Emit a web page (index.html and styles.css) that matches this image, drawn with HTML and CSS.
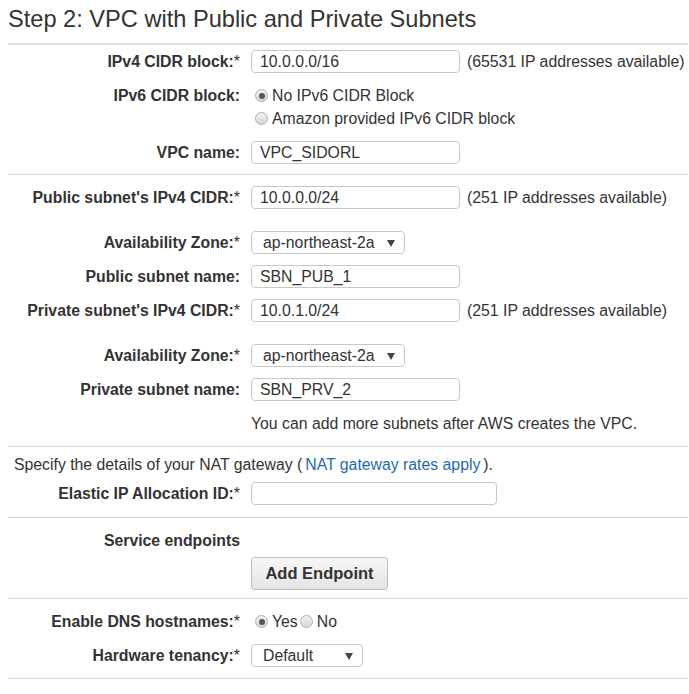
FILE: index.html
```html
<!DOCTYPE html>
<html>
<head>
<meta charset="utf-8">
<link rel="stylesheet" href="styles.css">
</head>
<body>
<div class="page">
  <h1 class="title">Step 2: VPC with Public and Private Subnets</h1>

  <div class="section s1">
    <div class="row">
      <div class="label">IPv4 CIDR block:<span class="req">*</span></div>
      <div class="field"><span class="input w209">10.0.0.0/16</span><span class="hint">(65531 IP addresses available)</span></div>
    </div>
    <div class="row">
      <div class="label">IPv6 CIDR block:</div>
      <div class="field col">
        <div class="opt"><span class="radio on"></span>No IPv6 CIDR Block</div>
        <div class="opt"><span class="radio"></span>Amazon provided IPv6 CIDR block</div>
      </div>
    </div>
    <div class="row">
      <div class="label">VPC name:</div>
      <div class="field"><span class="input w209">VPC_SIDORL</span></div>
    </div>
  </div>

  <div class="section s2">
    <div class="row extra">
      <div class="label">Public subnet's IPv4 CIDR:<span class="req">*</span></div>
      <div class="field"><span class="input w209">10.0.0.0/24</span><span class="hint">(251 IP addresses available)</span></div>
    </div>
    <div class="row">
      <div class="label">Availability Zone:<span class="req">*</span></div>
      <div class="field"><span class="select w154"><span>ap-northeast-2a</span><span class="arrow"></span></span></div>
    </div>
    <div class="row">
      <div class="label">Public subnet name:</div>
      <div class="field"><span class="input w209">SBN_PUB_1</span></div>
    </div>
    <div class="row extra">
      <div class="label">Private subnet's IPv4 CIDR:<span class="req">*</span></div>
      <div class="field"><span class="input w209">10.0.1.0/24</span><span class="hint">(251 IP addresses available)</span></div>
    </div>
    <div class="row">
      <div class="label">Availability Zone:<span class="req">*</span></div>
      <div class="field"><span class="select w154"><span>ap-northeast-2a</span><span class="arrow"></span></span></div>
    </div>
    <div class="row">
      <div class="label">Private subnet name:</div>
      <div class="field"><span class="input w209">SBN_PRV_2</span></div>
    </div>
    <div class="row">
      <div class="label"></div>
      <div class="field">You can add more subnets after AWS creates the VPC.</div>
    </div>
  </div>

  <div class="section s3">
    <div class="note">Specify the details of your NAT gateway (<span class="sp"></span><a class="link" href="#">NAT gateway rates apply</a><span class="sp"></span>).</div>
    <div class="row">
      <div class="label">Elastic IP Allocation ID:<span class="req">*</span></div>
      <div class="field"><span class="input w246"></span></div>
    </div>
  </div>

  <div class="section s4">
    <div class="row">
      <div class="label">Service endpoints</div>
      <div class="field"></div>
    </div>
    <div class="row btnrow">
      <div class="label"></div>
      <div class="field"><span class="button">Add Endpoint</span></div>
    </div>
  </div>

  <div class="section s5">
    <div class="row">
      <div class="label">Enable DNS hostnames:<span class="req">*</span></div>
      <div class="field"><span class="opt"><span class="radio on"></span>Yes</span><span class="opt"><span class="radio"></span>No</span></div>
    </div>
    <div class="row">
      <div class="label">Hardware tenancy:<span class="req">*</span></div>
      <div class="field"><span class="select w112"><span>Default</span><span class="arrow"></span></span></div>
    </div>
  </div>
</div>
</body>
</html>
```

FILE: styles.css
```css
* { box-sizing: border-box; }
html, body { margin: 0; padding: 0; background: #fff; }
body {
  font-family: "Liberation Sans", Arial, sans-serif;
  font-size: 15.8px;
  color: #333;
}
.page { padding: 0 1px 0 8px; }
.title {
  margin: 0;
  font-weight: normal;
  font-size: 23.6px;
  line-height: 26px;
  padding-top: 6px;
  height: 43px;
  color: #333;
  white-space: nowrap;
}
.section {
  display: flex;
  flex-direction: column;
  gap: 11px;
  border-bottom: 1px solid #d5d5d5;
}
.s1 { border-top: 2px solid #e3e3e3; padding: 5px 0 10px; }
.s2 { padding: 11px 0 11px; }
.s3 { padding: 6px 0 12px; gap: 6px; }
.s4 { padding: 11px 0 8px; gap: 5px; }
.s5 { padding: 11px 0 11px; }

.row {
  display: grid;
  grid-template-columns: 232px 1fr;
  column-gap: 11px;
  min-height: 23px;
}
.row.extra { padding-bottom: 11px; }
.label {
  text-align: right;
  font-weight: bold;
  line-height: 23px;
  white-space: nowrap;
}
.req { font-weight: normal; }
.field {
  display: flex;
  align-items: center;
  line-height: 23px;
  white-space: nowrap;
}
.field.col { flex-direction: column; align-items: flex-start; }
.input {
  display: inline-block;
  height: 23px;
  line-height: 21px;
  border: 1px solid #c8c8c8;
  border-radius: 4px;
  padding: 0 8px;
  color: #333;
  background: #fff;
}
.w209 { width: 209px; }
.w246 { width: 246px; }
.w154 { width: 154px; }
.w112 { width: 112px; }
.hint { margin-left: 7px; }
.select {
  display: inline-flex;
  align-items: center;
  justify-content: space-between;
  height: 23px;
  border: 1px solid #c8c8c8;
  border-radius: 4px;
  padding: 0 9px 0 11px;
  background: #fff;
}
.arrow {
  width: 0; height: 0;
  border-left: 4px solid transparent;
  border-right: 4px solid transparent;
  border-top: 7px solid #444;
  margin-top: 1px;
}
.opt { display: flex; align-items: center; height: 23px; }
.radio {
  display: inline-block;
  position: relative;
  width: 13px; height: 13px;
  border: 1px solid #b0b0b0;
  border-radius: 50%;
  background: linear-gradient(#f2f2f2, #d6d6d6);
  margin: 0 4px 0 4px;
}
.radio.on::after {
  content: "";
  position: absolute;
  left: 2.5px; top: 2.5px;
  width: 6px; height: 6px;
  border-radius: 50%;
  background: #555;
}
.s5 .opt + .opt .radio { margin-left: 2px; }
.note { line-height: 23px; padding-left: 6px; white-space: nowrap; }
.sp { display: inline-block; width: 3px; }
.link { color: #1f69b3; text-decoration: none; }
.button {
  display: inline-flex;
  align-items: center;
  justify-content: center;
  width: 137px;
  height: 33px;
  border: 1px solid #bdbdbd;
  border-radius: 3px;
  background: linear-gradient(#f7f7f7, #e4e4e4);
  font-weight: bold;
  font-size: 16.5px;
  color: #333;
}
.btnrow { min-height: 33px; }
```
